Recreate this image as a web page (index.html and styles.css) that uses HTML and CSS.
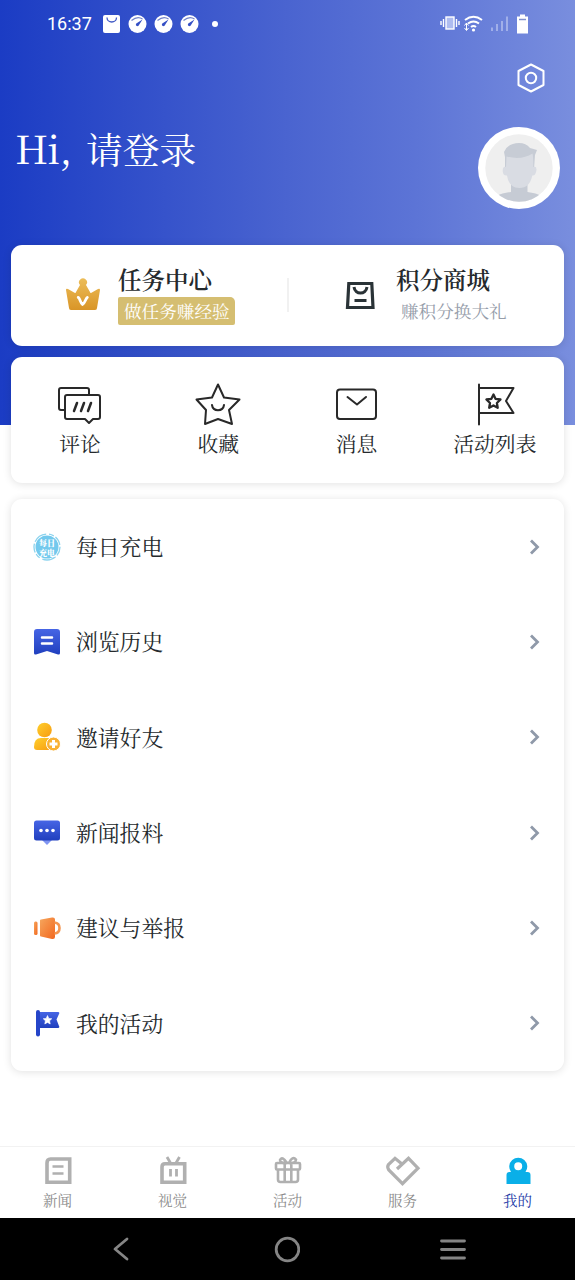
FILE: index.html
```html
<!DOCTYPE html>
<html lang="zh-CN">
<head>
<meta charset="utf-8">
<title>我的</title>
<link rel="stylesheet" href="styles.css">
</head>
<body>
<div class="screen">
  <header class="status">
    <span class="clock">16:37</span>
    <svg class="status-left" width="120" height="20" viewBox="0 0 120 20">
      <rect x="1" y="1" width="17" height="18" rx="2" fill="#fff"/>
      <path d="M5 3.500c0 6 9.500 6 9.500 0" fill="none" stroke="#4059c5" stroke-width="1.300"/>
      <g id="gauge"><circle cx="35.500" cy="10" r="9" fill="#fff"/><path d="M29.500 6.500q6-5 11-1.500" fill="none" stroke="#7283c9" stroke-width="1.200"/><path d="M40.500 5.500l-3.500 5.500a1.600 1.600 0 1 1-2-2z" fill="#3550c5"/></g>
      <use href="#gauge" x="26"/><use href="#gauge" x="52"/>
      <circle cx="113" cy="10" r="3" fill="#fff"/>
    </svg>
    <svg class="status-right" width="92" height="22" viewBox="0 0 92 22">
      <rect x="6" y="4" width="8" height="12" fill="#aebcf0" stroke="#fff" stroke-width="1.400"/>
      <path d="M3.500 6v8M16.500 6v8M1 8v4M19 8v4" stroke="#fff" stroke-width="1.400"/>
      <path d="M25 7q8.500-6.500 17 0M28 10.500q5.500-4 11 0M31 14q2.500-2 5 0" fill="none" stroke="#fff" stroke-width="2"/>
      <circle cx="33.500" cy="17" r="1.600" fill="#fff"/>
      <path d="M26.500 10v7M24.500 12.500l2-2.500 2 2.500M24.500 15l2 2.500 2-2.500" fill="none" stroke="#fff"/>
      <path d="M52 18v-3.500M57 18v-7M62 18V8M67 18V3.500" stroke="#a0afe9" stroke-width="2"/>
      <path d="M80 1.500h5v2h3v17H77v-17h3z" fill="#fff"/><path d="M79 6.500h7" stroke="#8190cd" stroke-width="1.500"/>
    </svg>
  </header>

  <div class="toolbar">
    <svg width="30" height="32" viewBox="0 0 30 32" fill="none" stroke="#fff" stroke-width="2" stroke-linejoin="round">
      <path d="M15 2.500L27.500 9v14L15 29.500 2.500 23V9z"/><circle cx="15" cy="16" r="5.200"/>
    </svg>
  </div>

  <section class="profile">
    <h1 class="greeting"><span class="hi">Hi,</span><span>请登录</span></h1>
    <svg class="avatar" width="82" height="82" viewBox="0 0 82 82">
      <defs><clipPath id="face"><circle cx="41" cy="41" r="33.700"/></clipPath></defs>
      <circle cx="41" cy="41" r="41" fill="#fff"/><circle cx="41" cy="41" r="33.700" fill="#efefef"/>
      <g clip-path="url(#face)">
        <path d="M19 69q5-3 14-4v-9h16.500v9q9 1 14 4v12H19z" fill="#c6cbd4"/>
        <path d="M27 42V30l-1-5q4-9 15-9 7 0 11 5l7 2-2 5-1 14z" fill="#c7ccd5"/>
        <path d="M28.500 29.500q15 4 26-3 1 4 .8 13.500 4-1 3 4-1 5-4 4.500-2.500 12.500-13 12.500T29 48.500q-4 .5-4.300-4.500 0-5 3.300-4z" fill="#d9dce3"/>
      </g>
    </svg>
  </section>

  <main class="content">
    <section class="card promos">
      <div class="promo task">
        <svg width="36" height="36" viewBox="0 0 36 36">
          <defs><linearGradient id="gold" x2="0" y2="1"><stop stop-color="#ecbd59"/><stop offset="1" stop-color="#d99527"/></linearGradient></defs>
          <path d="M1 14q0-2 2-1l7 4q1 0 1-1l4-7a4 4 0 1 1 6 0l4 7q0 1 1 1l7-4q2-1 2 1l-3 18q0 2-2 2H6q-2 0-2-2z" fill="url(#gold)"/>
          <path d="M13.200 21.500c1.500 0 2.300 6 4.300 7 2.500-1 3-6 4.800-7" fill="none" stroke="#fff" stroke-width="2.800" stroke-linecap="round" stroke-linejoin="round"/>
        </svg>
        <div class="promo-text"><h2>任务中心</h2><p class="tag">做任务赚经验</p></div>
      </div>
      <div class="promo mall">
        <svg width="32" height="32" viewBox="0 0 32 32" fill="none" stroke="#2a3337" stroke-width="3.200">
          <path d="M4.800 4.500h23l1.200 24H3.500z"/><path d="M10 8c1 8 12 8 13 0M10.500 21.500h12" stroke-width="3"/>
        </svg>
        <div class="promo-text"><h2>积分商城</h2><p class="sub">赚积分换大礼</p></div>
      </div>
    </section>

    <section class="card shortcuts">
      <div class="shortcut">
        <svg width="48" height="44" viewBox="0 0 48 44" class="line">
          <path d="M9 27H5q-2 0-2-2V7q0-2 2-2h26q2 0 2 2v4"/><path d="M11 12h31q2 0 2 2v20q0 2-2 2h-5l-4 4-4-4H11q-2 0-2-2V14q0-2 2-2z"/><path d="M21 20l-3 8M28 20l-3 8M35 20l-3 8" stroke-width="2.500"/>
        </svg><span>评论</span>
      </div>
      <div class="shortcut">
        <svg width="48" height="44" viewBox="0 0 48 44" class="line">
          <path d="M24 1.500l6 13 15.500 2L35 27l3 14-14-5-13 5 1-14L2.500 16.500l15.500-2z"/><path d="M18 22c1 7 11 7 12 0"/>
        </svg><span>收藏</span>
      </div>
      <div class="shortcut">
        <svg width="48" height="44" viewBox="0 0 48 44" class="line">
          <rect x="4" y="6.500" width="39" height="29.500" rx="3"/><path d="M14.500 14l9.500 7.500L33 14"/>
        </svg><span>消息</span>
      </div>
      <div class="shortcut">
        <svg width="48" height="44" viewBox="0 0 48 44" class="line">
          <path d="M8 1.500v40M8 5h34.500l-7.500 13 7.500 12H8"/><path d="M22.500 11.500l2 4.300 5 .7-3.600 3.500.8 4.800-4.200-2.300-4.300 2.300.8-4.800-3.600-3.500 5-.7z" stroke-width="2.300"/>
        </svg><span>活动列表</span>
      </div>
    </section>

    <nav class="card menu">
      <a class="row">
        <svg width="28" height="28" viewBox="0 0 28 28">
          <circle cx="14" cy="14" r="11.500" fill="#73c9ed"/><circle cx="14" cy="14" r="13" fill="none" stroke="#8bd3ee" stroke-width="1.300" stroke-dasharray="9 2 14 3 5 2"/>
          <text x="14" y="12.500" class="badge-text">每日</text><text x="14" y="22.500" class="badge-text">充电</text>
        </svg><span>每日充电</span><svg class="chevron" width="14" height="20" viewBox="0 0 14 20"><path d="M4 3.500l6.500 6.500L4 16.500"/></svg>
      </a>
      <a class="row">
        <svg width="28" height="28" viewBox="0 0 28 28">
          <defs><linearGradient id="blue" x2="0" y2="1"><stop stop-color="#4665e5"/><stop offset="1" stop-color="#203fbe"/></linearGradient></defs>
          <path d="M4 1h20q3 0 3 3v21q0 2-2 1.500L14 23 3 26.500Q1 27 1 25V4q0-3 3-3z" fill="url(#blue)"/><path d="M9 9.500h10M9 15.500h10" stroke="#fff" stroke-width="2.500" stroke-linecap="round"/>
        </svg><span>浏览历史</span><svg class="chevron" width="14" height="20" viewBox="0 0 14 20"><path d="M4 3.500l6.500 6.500L4 16.500"/></svg>
      </a>
      <a class="row">
        <svg width="28" height="30" viewBox="0 0 28 30">
          <defs><linearGradient id="amber" x2="1" y2="1"><stop stop-color="#ffcf2c"/><stop offset="1" stop-color="#f79b10"/></linearGradient></defs>
          <circle cx="11.500" cy="8" r="7.300" fill="url(#amber)"/><path d="M1 25q0-9 7-9h7q5 0 6 8l-2 4H4q-3 0-3-3z" fill="url(#amber)"/><circle cx="20.500" cy="22" r="7" fill="#f9b133" stroke="#fff"/><path d="M16.500 22h8M20.500 18v8" stroke="#fff" stroke-width="3"/>
        </svg><span>邀请好友</span><svg class="chevron" width="14" height="20" viewBox="0 0 14 20"><path d="M4 3.500l6.500 6.500L4 16.500"/></svg>
      </a>
      <a class="row">
        <svg width="28" height="28" viewBox="0 0 28 28">
          <path d="M9 21h10l-5 5z" fill="#8095f1"/><rect x="1" y="1.500" width="26" height="20" rx="2.500" fill="url(#blue)"/><g fill="#fff"><circle cx="8" cy="11.500" r="1.800"/><circle cx="14" cy="11.500" r="1.800"/><circle cx="20" cy="11.500" r="1.800"/></g>
        </svg><span>新闻报料</span><svg class="chevron" width="14" height="20" viewBox="0 0 14 20"><path d="M4 3.500l6.500 6.500L4 16.500"/></svg>
      </a>
      <a class="row">
        <svg width="28" height="28" viewBox="0 0 28 28">
          <defs><linearGradient id="orange" x2="1" y2="1"><stop stop-color="#f6a75e"/><stop offset="1" stop-color="#f2671e"/></linearGradient></defs>
          <rect x="1" y="7.500" width="3.500" height="13.500" rx="1.500" fill="url(#orange)"/><path d="M7 6.500Q7 5.500 8 5.500l11-2q3-.5 3 2v17.500q0 2.500-3 2L8 22.500q-1 0-1-1z" fill="url(#orange)"/><path d="M21.500 8.500q5 .5 5 5.500t-5 5.500" fill="none" stroke="#f49651" stroke-width="2.600"/>
        </svg><span>建议与举报</span><svg class="chevron" width="14" height="20" viewBox="0 0 14 20"><path d="M4 3.500l6.500 6.500L4 16.500"/></svg>
      </a>
      <a class="row">
        <svg width="28" height="28" viewBox="0 0 28 28">
          <path d="M5 3h20q2 0 1 2l-2.500 5.500L26 17q1 2-1 2H5z" fill="url(#blue)"/><rect x="3" y="1" width="4" height="26.500" rx="2" fill="#2545c9"/><path d="M14.500 6.500l1.300 2.900 3 .3-2.200 2.100.6 3.200-2.700-1.600-2.700 1.600.6-3.200-2.200-2.100 3-.3z" fill="#fff" stroke="#fff" stroke-width=".6"/>
        </svg><span>我的活动</span><svg class="chevron" width="14" height="20" viewBox="0 0 14 20"><path d="M4 3.500l6.500 6.500L4 16.500"/></svg>
      </a>
    </nav>
  </main>

  <nav class="tabs">
    <a class="tab"><svg width="36" height="32" viewBox="0 0 36 32" class="tab-icon"><path d="M10.500 4h19.200v23.200H7V8q0-4 3.500-4z"/><path d="M12.500 11.500h11M12.500 18.500h11" stroke-width="2.600"/></svg><span>新闻</span></a>
    <a class="tab"><svg width="36" height="32" viewBox="0 0 36 32" class="tab-icon"><path d="M10 8.700h19.700v18.500H7V12q0-3.300 3-3.300z"/><path d="M12 2l3.500 6M24.500 2L21 8M15.500 14v7.500M21.500 14v7.500" stroke-width="2.800"/></svg><span>视觉</span></a>
    <a class="tab"><svg width="36" height="32" viewBox="0 0 36 32" class="tab-icon gift"><rect x="6" y="8" width="24" height="6.500" rx="1"/><path d="M8 14.500v10q0 2.500 2.500 2.500h15q2.500 0 2.500-2.500v-10M14.700 8.500V27M21.300 8.500V27M17 8q-7 .5-7-3 2-4.500 7 3M19 8q7 .5 7-3.500-3.500-4-7 3.500"/></svg><span>活动</span></a>
    <a class="tab"><svg width="36" height="32" viewBox="0 0 36 32" class="tab-icon heart"><path d="M12 14L23.500 3.300 33 13.200 17.500 28.700 3.800 15Q1.800 12 3.500 9.500L10 3.300 17 9"/></svg><span>服务</span></a>
    <a class="tab active"><svg width="36" height="32" viewBox="0 0 36 32"><path fill="#0aafe8" fill-rule="evenodd" d="M11 17A9 9 0 1 1 25.500 17h2q3 0 3 3v9h-24v-9q0-3 3-3zM18.200 7.200a4 4 0 1 0 0 8 4 4 0 0 0 0-8z"/></svg><span>我的</span></a>
  </nav>

  <footer class="system">
    <svg width="24" height="26" viewBox="0 0 24 26"><path d="M18 3L6 13l12 10"/></svg>
    <svg width="28" height="28" viewBox="0 0 28 28"><circle cx="15.500" cy="14.500" r="11.300"/></svg>
    <svg width="28" height="26" viewBox="0 0 28 26"><path d="M2.500 5h23M2.500 13.500h23M2.500 22h23"/></svg>
  </footer>
</div>
</body>
</html>
```
FILE: styles.css
```css
* { box-sizing: border-box; }
body { margin: 0; background: #fff; }
h1, h2, p { margin: 0; font-weight: 400; }
svg { display: block; flex: none; }
.screen {
  width: 575px;
  height: 1280px;
  display: flex;
  flex-direction: column;
  overflow: hidden;
  color: #252a2d;
  font-family: "Noto Serif CJK SC", "Source Han Serif SC", "Noto Serif SC", "Noto Sans CJK SC", serif;
  background: linear-gradient(90deg, #1b3cc4 0%, #4a64d0 50%, #5c74d6 72%, #798ede 100%) 0 0 / 100% 425px no-repeat #fff;
}
.status { height: 47px; display: flex; align-items: center; padding: 0 43px 0 47px; color: #fff; }
.clock { width: 55px; font: 400 18px/22px Roboto, sans-serif; }
.status-right { margin-left: auto; }
.toolbar { height: 62px; display: flex; justify-content: flex-end; align-items: center; padding-right: 29px; }
.profile { height: 136px; padding: 18px 15px 0; display: flex; justify-content: space-between; }
.greeting { display: flex; height: 44px; color: #fff; font-size: 36.800px; line-height: 43px; }
.hi { width: 71px; font-size: 39px; letter-spacing: -.9px; line-height: 40px; }
.content { display: flex; flex-direction: column; padding: 0 11px; }
.card { background: #fff; border-radius: 11px; box-shadow: 0 1px 8px rgba(0, 0, 0, .12); }
.promos { height: 101px; display: grid; grid-template-columns: 277px 276px; margin-bottom: 11px; }
.promo { display: flex; padding-top: 19px; }
.promo > svg { margin-top: 12px; }
.task { padding-left: 54px; position: relative; }
.task::after { content: ""; position: absolute; right: -1px; top: 33px; width: 2px; height: 34px; background: #f1f1f1; }
.task .promo-text { margin-left: 17px; }
.mall { padding-left: 56px; }
.mall > svg { margin-top: 15px; }
.mall .promo-text { margin-left: 20px; }
.promo h2 { height: 33px; font-size: 23.500px; line-height: 31px; font-weight: 600; }
.promo p { height: 28px; line-height: 28px; font-size: 17.600px; white-space: nowrap; }
.tag { width: 117px; padding-left: 6px; border-radius: 2px 5px 2px 2px; color: #fff; background: #d5be71; }
.sub { padding-left: 5px; color: #969daa; }
.shortcuts { height: 126px; display: grid; grid-template-columns: repeat(4, 1fr); margin-bottom: 16px; }
.shortcut { display: flex; flex-direction: column; align-items: center; padding-top: 26px; font-size: 20.800px; line-height: 32px; }
.line { fill: none; stroke: #292929; stroke-width: 2; stroke-linejoin: round; stroke-linecap: round; }
.menu { height: 572px; display: grid; grid-template-rows: repeat(6, 1fr); }
.row { display: flex; align-items: center; padding: 0 23px 0 22px; font-size: 21.800px; line-height: 32px; }
.row span { margin-left: 15px; padding-bottom: 1px; }
.badge-text { fill: #fff; font-size: 8px; line-height: 8px; font-weight: 900; text-anchor: middle; }
.chevron { margin-left: auto; fill: none; stroke: #8f99a9; stroke-width: 2.800; }
.tabs { height: 72px; margin-top: auto; display: grid; grid-template-columns: repeat(5, 1fr); border-top: 1px solid #f2f2f2; background: #fff; }
.tab { display: flex; flex-direction: column; align-items: center; padding-top: 8px; color: #8b8b8b; font-size: 14.500px; line-height: 26px; }
.tab-icon { fill: none; stroke: #b0b0b0; stroke-width: 3.600; }
.gift { stroke-width: 2.600; }
.heart { stroke-width: 3.200; overflow: visible; }
.tab.active { color: #1e3ba7; }
.system { height: 62px; flex: none; background: #000; display: flex; align-items: center; padding: 0 108px 0 109px; justify-content: space-between; }
.system svg { fill: none; stroke: #858585; stroke-width: 2.800; stroke-linecap: round; stroke-linejoin: round; }
```
